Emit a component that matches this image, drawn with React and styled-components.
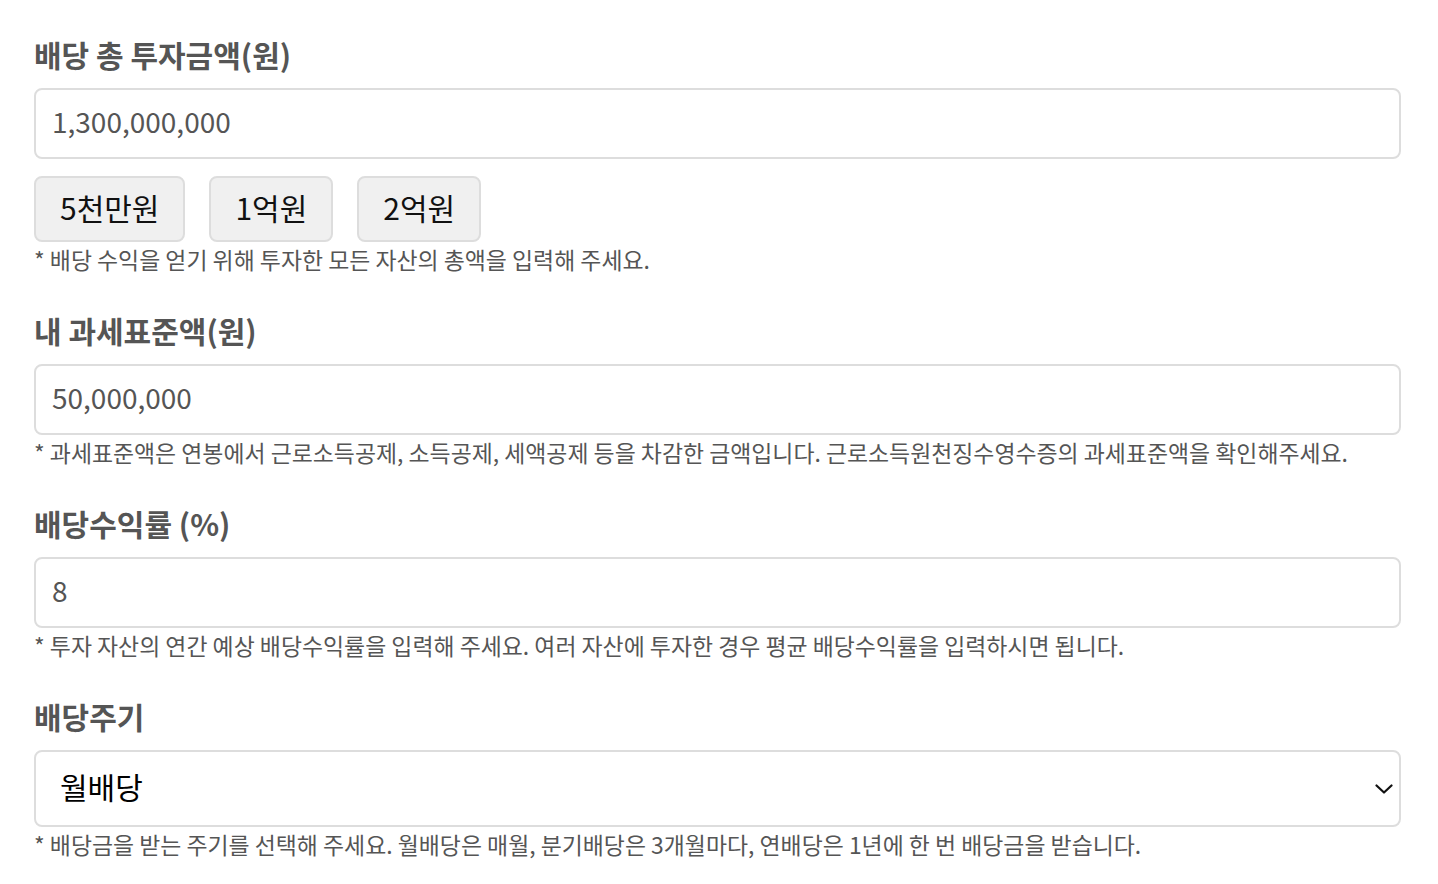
import React, { useState } from "react";
import styled, { createGlobalStyle } from "styled-components";

const GlobalStyle = createGlobalStyle`
  html, body { margin: 0; padding: 0; background: #fff; }
  body { font-family: "Noto Sans CJK KR", "Noto Sans", sans-serif; }
  * { box-sizing: border-box; }
`;

const Page = styled.div`
  padding: 37px 37px 0 34px;
  display: flex;
  flex-direction: column;
  gap: 38px;
`;

const Section = styled.section`
  display: flex;
  flex-direction: column;
`;

const Label = styled.label`
  display: block;
  font-size: 30px;
  line-height: 34px;
  font-weight: 700;
  color: #555;
  margin-bottom: 17px;
`;

const TextInput = styled.input`
  width: 100%;
  height: 71px;
  border: 2px solid #ddd;
  border-radius: 8px;
  padding: 0 16px 6px;
  font-family: inherit;
  font-size: 28px;
  color: #555;
  background: #fff;
  outline: none;
`;

const QuickRow = styled.div`
  display: flex;
  gap: 24px;
  margin-top: 17px;
`;

const QuickButton = styled.button`
  height: 66px;
  padding: 0 24px 4px;
  border: 2px solid #ddd;
  border-radius: 8px;
  background: #f0f0f0;
  font-family: inherit;
  font-size: 30px;
  color: #111;
  cursor: pointer;
`;

const Hint = styled.p`
  margin: 2px 0 0;
  font-size: 22.9px;
  line-height: 31px;
  color: #555;
`;

const SelectWrap = styled.div`
  position: relative;
`;

const Select = styled.select`
  width: 100%;
  height: 77px;
  appearance: none;
  -webkit-appearance: none;
  border: 2px solid #ddd;
  border-radius: 8px;
  padding: 0 40px 6px 24px;
  font-family: inherit;
  font-size: 30px;
  color: #000;
  background: #fff;
  outline: none;
`;

const Chevron = styled.svg`
  position: absolute;
  right: 8px;
  top: 50%;
  transform: translateY(-50%);
  pointer-events: none;
`;

export default function App() {
  const [total, setTotal] = useState("1,300,000,000");
  const [base, setBase] = useState("50,000,000");
  const [rate, setRate] = useState("8");
  const [cycle, setCycle] = useState("monthly");

  return (
    <>
      <GlobalStyle />
      <Page>
        <Section>
          <Label>배당 총 투자금액(원)</Label>
          <TextInput value={total} onChange={(e) => setTotal(e.target.value)} />
          <QuickRow>
            <QuickButton onClick={() => setTotal("50,000,000")}>5천만원</QuickButton>
            <QuickButton onClick={() => setTotal("100,000,000")}>1억원</QuickButton>
            <QuickButton onClick={() => setTotal("200,000,000")}>2억원</QuickButton>
          </QuickRow>
          <Hint>* 배당 수익을 얻기 위해 투자한 모든 자산의 총액을 입력해 주세요.</Hint>
        </Section>
        <Section>
          <Label>내 과세표준액(원)</Label>
          <TextInput value={base} onChange={(e) => setBase(e.target.value)} />
          <Hint>
            * 과세표준액은 연봉에서 근로소득공제, 소득공제, 세액공제 등을 차감한 금액입니다. 근로소득원천징수영수증의 과세표준액을 확인해주세요.
          </Hint>
        </Section>
        <Section>
          <Label>배당수익률 (%)</Label>
          <TextInput value={rate} onChange={(e) => setRate(e.target.value)} />
          <Hint>
            * 투자 자산의 연간 예상 배당수익률을 입력해 주세요. 여러 자산에 투자한 경우 평균 배당수익률을 입력하시면 됩니다.
          </Hint>
        </Section>
        <Section>
          <Label>배당주기</Label>
          <SelectWrap>
            <Select value={cycle} onChange={(e) => setCycle(e.target.value)}>
              <option value="monthly">월배당</option>
              <option value="quarterly">분기배당</option>
              <option value="yearly">연배당</option>
            </Select>
            <Chevron width="18" height="10" viewBox="0 0 18 10" fill="none">
              <polyline points="1.5,1.5 9,8.5 16.5,1.5" stroke="#111" strokeWidth="2.2" strokeLinecap="round" strokeLinejoin="round" />
            </Chevron>
          </SelectWrap>
          <Hint>
            * 배당금을 받는 주기를 선택해 주세요. 월배당은 매월, 분기배당은 3개월마다, 연배당은 1년에 한 번 배당금을 받습니다.
          </Hint>
        </Section>
      </Page>
    </>
  );
}
